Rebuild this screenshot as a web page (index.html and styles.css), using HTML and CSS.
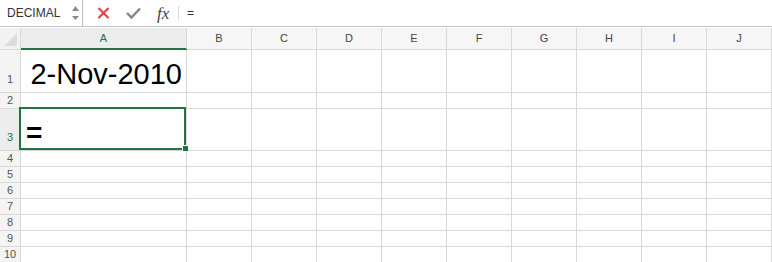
FILE: index.html
```html
<!DOCTYPE html>
<html lang="en">
<head>
<meta charset="UTF-8">
<title>DECIMAL</title>
<link rel="stylesheet" href="styles.css">
</head>
<body>
<!-- Formula bar -->
<div class="formula-bar">
    <div class="name-box">
        <span class="name">DECIMAL</span>
        <span class="spinner">
            <svg width="7" height="14" viewBox="0 0 7 14"><path d="M3.5 0 L7 5 L0 5 Z" fill="#8a8a8a"/><path d="M0 10 L7 10 L3.5 14 Z" fill="#8a8a8a"/></svg>
        </span>
    </div>
    <div class="bar-icons">
        <svg class="icon" width="13" height="12" viewBox="0 0 13 12"><path d="M1.5 1 L11.5 11 M11.5 1 L1.5 11" stroke="#e0454b" stroke-width="2.2" fill="none"/></svg>
        <svg class="icon check" width="15" height="12" viewBox="0 0 15 12"><path d="M1 6 L5.5 10.5 L14 1.5" stroke="#7a8c7d" stroke-width="2.4" fill="none"/></svg>
        <span class="fx">fx</span>
    </div>
    <div class="formula">=</div>
</div>

<!-- Sheet -->
<div class="sheet">
    <div class="row head">
        <div class="corner"><span class="tri"></span></div>
        <div class="col active">A</div>
        <div class="col">B</div>
        <div class="col">C</div>
        <div class="col">D</div>
        <div class="col">E</div>
        <div class="col">F</div>
        <div class="col">G</div>
        <div class="col">H</div>
        <div class="col">I</div>
        <div class="col">J</div>
    </div>
    <div class="row tall">
        <div class="num">1</div>
        <div class="cell date"><span>2-Nov-2010</span></div>
        <div class="cell"></div><div class="cell"></div><div class="cell"></div><div class="cell"></div><div class="cell"></div><div class="cell"></div><div class="cell"></div><div class="cell"></div><div class="cell"></div>
    </div>
    <div class="row">
        <div class="num">2</div>
        <div class="cell"></div><div class="cell"></div><div class="cell"></div><div class="cell"></div><div class="cell"></div><div class="cell"></div><div class="cell"></div><div class="cell"></div><div class="cell"></div><div class="cell"></div>
    </div>
    <div class="row tall3">
        <div class="num active">3</div>
        <div class="cell selected"><span>=</span><i class="handle"></i></div>
        <div class="cell"></div><div class="cell"></div><div class="cell"></div><div class="cell"></div><div class="cell"></div><div class="cell"></div><div class="cell"></div><div class="cell"></div><div class="cell"></div>
    </div>
    <div class="row">
        <div class="num">4</div>
        <div class="cell"></div><div class="cell"></div><div class="cell"></div><div class="cell"></div><div class="cell"></div><div class="cell"></div><div class="cell"></div><div class="cell"></div><div class="cell"></div><div class="cell"></div>
    </div>
    <div class="row">
        <div class="num">5</div>
        <div class="cell"></div><div class="cell"></div><div class="cell"></div><div class="cell"></div><div class="cell"></div><div class="cell"></div><div class="cell"></div><div class="cell"></div><div class="cell"></div><div class="cell"></div>
    </div>
    <div class="row">
        <div class="num">6</div>
        <div class="cell"></div><div class="cell"></div><div class="cell"></div><div class="cell"></div><div class="cell"></div><div class="cell"></div><div class="cell"></div><div class="cell"></div><div class="cell"></div><div class="cell"></div>
    </div>
    <div class="row">
        <div class="num">7</div>
        <div class="cell"></div><div class="cell"></div><div class="cell"></div><div class="cell"></div><div class="cell"></div><div class="cell"></div><div class="cell"></div><div class="cell"></div><div class="cell"></div><div class="cell"></div>
    </div>
    <div class="row">
        <div class="num">8</div>
        <div class="cell"></div><div class="cell"></div><div class="cell"></div><div class="cell"></div><div class="cell"></div><div class="cell"></div><div class="cell"></div><div class="cell"></div><div class="cell"></div><div class="cell"></div>
    </div>
    <div class="row">
        <div class="num">9</div>
        <div class="cell"></div><div class="cell"></div><div class="cell"></div><div class="cell"></div><div class="cell"></div><div class="cell"></div><div class="cell"></div><div class="cell"></div><div class="cell"></div><div class="cell"></div>
    </div>
    <div class="row">
        <div class="num">10</div>
        <div class="cell"></div><div class="cell"></div><div class="cell"></div><div class="cell"></div><div class="cell"></div><div class="cell"></div><div class="cell"></div><div class="cell"></div><div class="cell"></div><div class="cell"></div>
    </div>
</div>
</body>
</html>
```

FILE: styles.css
```css
/* Page */
body {
    margin: 0;
    padding: 0;
    background-color: #ffffff;
    font-family: "Liberation Sans", Arial, sans-serif;
    color: #333333;
    overflow: hidden;
}
/* Formula bar */
.formula-bar {
    display: flex;
    align-items: stretch;
    height: 26px;
    border-bottom: 1px solid #c4c4c4;
    background-color: #ffffff;
}
.name-box {
    width: 83px;
    box-sizing: border-box;
    border-right: 1px solid #bdbdbd;
    display: flex;
    align-items: center;
    padding-left: 7px;
}
.name {
    font-size: 12px;
    color: #333333;
    width: 65px;
}
.spinner {
    display: flex;
    align-items: center;
}
.bar-icons {
    display: flex;
    align-items: center;
    width: 98px;
    box-sizing: border-box;
    padding-left: 14px;
}
.icon {
    display: block;
}
.check {
    margin-left: 16px;
}
.fx {
    font-family: "Liberation Serif", "Times New Roman", serif;
    font-style: italic;
    font-size: 17px;
    color: #444444;
    margin-left: 16px;
    padding-right: 9px;
    border-right: 1px solid #dcdcdc;
    line-height: 15px;
}
.formula {
    display: flex;
    align-items: center;
    padding-left: 6px;
    font-size: 12px;
    color: #333333;
}
/* Sheet grid */
.sheet {
    padding-top: 1px;
}
.row {
    display: grid;
    grid-template-columns: 21px 166px repeat(9, 65px);
    height: 16px;
}
.row.head {
    height: 22px;
}
.row.tall {
    height: 43px;
}
.row.tall3 {
    height: 42px;
}
.row > div {
    box-sizing: border-box;
    border-right: 1px solid #d8d8d8;
    border-bottom: 1px solid #d8d8d8;
}
.corner {
    background-color: #f2f2f2;
    position: relative;
}
.tri {
    position: absolute;
    right: 3px;
    bottom: 3px;
    width: 0;
    height: 0;
    border-left: 13px solid transparent;
    border-bottom: 13px solid #dddddd;
}
.col {
    background-color: #f6f6f6;
    font-size: 11px;
    color: #444444;
    text-align: center;
    line-height: 21px;
}
.col.active {
    background-color: #ececec;
    color: #217346;
    border-bottom: 2px solid #217346;
    line-height: 20px;
}
.num {
    background-color: #f4f4f4;
    font-size: 11px;
    color: #555555;
    text-align: center;
    display: flex;
    align-items: flex-end;
    justify-content: center;
    padding-bottom: 2px;
}
.tall .num {
    padding-bottom: 7px;
}
.num.active {
    background-color: #ececec;
    color: #217346;
    padding-bottom: 7px;
}
.cell {
    background-color: #ffffff;
}
/* Cell contents */
.date {
    display: flex;
    align-items: flex-end;
    justify-content: flex-end;
    padding-right: 4px;
    padding-bottom: 1px;
}
.date span {
    font-size: 29px;
    line-height: 34px;
    color: #000000;
}
.selected {
    position: relative;
    display: flex;
    align-items: flex-end;
    padding-left: 5px;
    padding-bottom: 0;
}
.selected span {
    font-size: 28px;
    line-height: 34px;
    font-weight: bold;
    color: #000000;
}
/* Selection frame */
.selected::after {
    content: "";
    position: absolute;
    top: -2px;
    left: -2px;
    right: 0;
    bottom: 0;
    border: 2px solid #217346;
}
.handle {
    position: absolute;
    right: -2px;
    bottom: -1px;
    width: 5px;
    height: 5px;
    background-color: #217346;
    border-left: 1px solid #ffffff;
    border-top: 1px solid #ffffff;
    z-index: 2;
}
```
